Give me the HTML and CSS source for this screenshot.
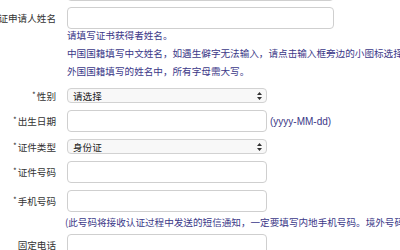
FILE: index.html
```html
<!DOCTYPE html>
<html lang="zh-CN">
<head>
    <meta charset="utf-8">
    <meta name="viewport" content="width=device-width, initial-scale=1">
    <title>证书申请</title>
    <link rel="stylesheet" href="styles.css">
</head>
<body>

    <div class="apply-form">
        <div class="form-row prev-row">
            <div class="form-label"></div>
            <div class="form-control wide"></div>
        </div>

        <div class="form-row">
            <div class="form-label">证申请人姓名</div>
            <div class="form-control wide"></div>
        </div>
        <div class="form-hint name-hint">
            <p>请填写证书获得者姓名。</p>
            <p>中国国籍填写中文姓名，如遇生僻字无法输入，请点击输入框旁边的小图标选择</p>
            <p>外国国籍填写的姓名中，所有字母需大写。</p>
        </div>

        <div class="form-row">
            <div class="form-label"><span class="star">*</span>性别</div>
            <div class="form-select">
                <span>请选择</span>
                <svg class="arrows" width="5" height="8" viewBox="0 0 5 8">
                    <path d="M2.5 0 L5 3 L0 3 Z M2.5 8 L5 5 L0 5 Z" fill="#333"/>
                </svg>
            </div>
        </div>

        <div class="form-row">
            <div class="form-label"><span class="star">*</span>出生日期</div>
            <div class="form-control"></div>
            <span class="form-note">(yyyy-MM-dd)</span>
        </div>

        <div class="form-row">
            <div class="form-label"><span class="star">*</span>证件类型</div>
            <div class="form-select">
                <span>身份证</span>
                <svg class="arrows" width="5" height="8" viewBox="0 0 5 8">
                    <path d="M2.5 0 L5 3 L0 3 Z M2.5 8 L5 5 L0 5 Z" fill="#333"/>
                </svg>
            </div>
        </div>

        <div class="form-row">
            <div class="form-label"><span class="star">*</span>证件号码</div>
            <div class="form-control"></div>
        </div>

        <div class="form-row">
            <div class="form-label"><span class="star">*</span>手机号码</div>
            <div class="form-control"></div>
        </div>
        <div class="form-hint phone-hint">
            <p>(此号码将接收认证过程中发送的短信通知，一定要填写内地手机号码。境外号码</p>
        </div>

        <div class="form-row">
            <div class="form-label">固定电话</div>
            <div class="form-control"></div>
        </div>
    </div>

</body>
</html>
```

FILE: styles.css
```css
body {
    margin: 0;
    background-color: #fff;
    color: #333;
    font-family: "Noto Sans CJK SC", "Liberation Sans", sans-serif;
    font-size: 9.6px;
    overflow: hidden;
}

.apply-form {
    margin-top: -21px;
    width: 400px;
    overflow: hidden;
}

.form-row {
    display: flex;
    align-items: center;
    margin-bottom: 7px;
}

.form-row.prev-row {
    margin-bottom: 6px;
}

.form-label {
    width: 56px;
    flex: none;
    margin-right: 11px;
    display: flex;
    justify-content: flex-end;
    white-space: nowrap;
    color: #333;
}

.star {
    font-size: 8px;
    align-self: flex-start;
    margin-right: 1px;
}

.form-control {
    width: 200px;
    height: 22px;
    box-sizing: border-box;
    border: 1px solid #cfcfcf;
    border-radius: 4px;
    background-color: #fff;
}

.form-control.wide {
    width: 267px;
}

.form-select {
    width: 200px;
    height: 15px;
    box-sizing: border-box;
    border: 1px solid #d2d2d2;
    border-radius: 4px;
    background-color: #f8f8f8;
    display: flex;
    align-items: center;
    justify-content: space-between;
    padding: 0 4px 0 5px;
    color: #222;
}

.form-note {
    margin-left: 3px;
    color: #3b3888;
    font-family: "Liberation Sans", sans-serif;
    font-size: 10px;
}

.form-hint {
    margin-left: 67px;
    color: #3b3888;
    white-space: nowrap;
}

.form-hint p {
    margin: 0;
    line-height: 18px;
}

.name-hint {
    margin-top: -10px;
    margin-bottom: 8px;
}

.phone-hint {
    margin-left: 65px;
    margin-top: -6px;
    margin-bottom: 3px;
}
```
